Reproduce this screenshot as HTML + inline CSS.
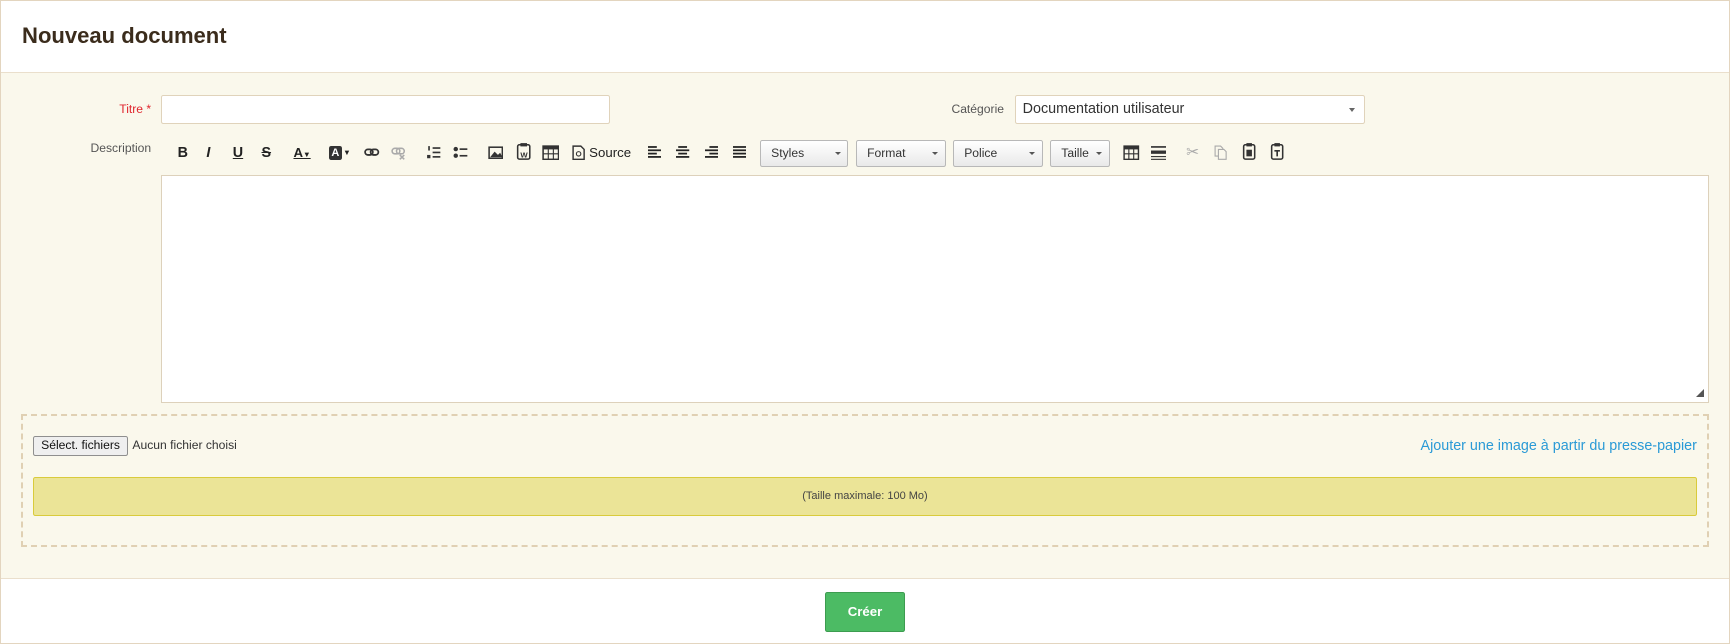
<!DOCTYPE html>
<html><head><meta charset="utf-8"><style>
html{zoom:1.10332}
*{box-sizing:border-box;margin:0;padding:0}
body{width:1568px;height:584px;overflow:hidden;font-family:"Liberation Sans",sans-serif;background:#fff;position:relative}
.abs{position:absolute}
.frame{left:0;top:0;width:1568px;height:584px;border:1px solid #e3d5bf}
.hdr{left:1px;top:1px;width:1566px;height:65px;background:#fff;border-bottom:1px solid #eadfcc}
.hdr h1{position:absolute;left:19px;top:20px;font-size:20px;font-weight:bold;color:#3b2c1c;letter-spacing:0}
.body{left:1px;top:66px;width:1566px;height:459px;background:#faf8ec;border-bottom:1px solid #eadfcc}
.lbl{font-size:11px;color:#555}
.inp{background:#fff;border:1px solid #e0d3bb;border-radius:2px}
.tb{font-size:12px;color:#222;top:128px;height:22px;line-height:22px}
.dd{top:127px;height:24px;border:1px solid #b8b8b8;border-radius:2px;background:linear-gradient(#fff,#e9e9e9);font-size:11px;color:#333;line-height:22px;padding-left:9px}
.dd:after{content:"";position:absolute;right:6px;top:10px;border:3px solid transparent;border-top:3px solid #555}
.ic{position:absolute;top:131px}
</style></head><body>
<div class="abs frame"></div>
<div class="abs hdr"><h1>Nouveau document</h1></div>
<div class="abs body"></div>

<div class="abs lbl" style="left:60px;width:77px;text-align:right;top:92px;color:#e0262e">Titre *</div>
<div class="abs inp" style="left:146px;top:86px;width:407px;height:26px"></div>
<div class="abs lbl" style="left:820px;width:90px;text-align:right;top:92px">Catégorie</div>
<div class="abs inp" style="left:920px;top:86px;width:317px;height:26px;font-size:13px;color:#333;padding:5px 0 0 6px">Documentation utilisateur
<span style="position:absolute;right:8px;top:11px;border:3px solid transparent;border-top:4px solid #666"></span></div>
<div class="abs lbl" style="left:60px;width:77px;text-align:right;top:128px">Description</div>

<div class="abs tb" style="left:161px;font-weight:bold;font-size:13px">B</div>
<div class="abs tb" style="left:187px;font-weight:bold;font-style:italic;font-size:13px">I</div>
<div class="abs tb" style="left:211px;font-weight:bold;text-decoration:underline;font-size:13px">U</div>
<div class="abs tb" style="left:237px;font-weight:bold;text-decoration:line-through;font-size:13px">S</div>
<div class="abs tb" style="left:266px;font-weight:bold;font-size:12px;text-decoration:underline">A<span style="font-size:7px">▼</span></div>
<div class="abs" style="left:298px;top:132px;width:12px;height:13px;background:#333;border-radius:2px;color:#fff;font-size:10px;font-weight:bold;text-align:center;line-height:13px">A</div>
<div class="abs tb" style="left:311px;font-size:7px">▼</div>
<svg class="ic" style="left:330px" width="14" height="14"><g fill="none" stroke="#333" stroke-width="1.6"><rect x="1" y="4" width="7" height="5" rx="2.5"/><rect x="6" y="4" width="7" height="5" rx="2.5"/></g></svg>
<svg class="ic" style="left:354px" width="14" height="14"><g fill="none" stroke="#aaa" stroke-width="1.4"><rect x="1" y="3" width="7" height="5" rx="2.5"/><rect x="5" y="3" width="7" height="5" rx="2.5"/><path d="M8 9l4 4M12 9l-4 4"/></g></svg>
<svg class="ic" style="left:386px" width="14" height="14"><g fill="#333"><rect x="6" y="2" width="7" height="1.5"/><rect x="6" y="6" width="7" height="1.5"/><rect x="6" y="10" width="7" height="1.5"/><rect x="2" y="1" width="1.5" height="4"/><rect x="1" y="9" width="3" height="3"/></g></svg>
<svg class="ic" style="left:411px" width="14" height="14"><g fill="#333"><rect x="6" y="3" width="7" height="1.5"/><rect x="6" y="9" width="7" height="1.5"/><circle cx="2.5" cy="3.7" r="2"/><circle cx="2.5" cy="9.7" r="2"/></g></svg>
<svg class="ic" style="left:442px" width="14" height="14"><rect x="1" y="2" width="12" height="10" fill="none" stroke="#333" stroke-width="1.4"/><path d="M2 11l4-5 3 3 2-2 2 4z" fill="#333"/></svg>
<svg class="ic" style="left:468px;top:129px" width="14" height="17"><rect x="1.5" y="2.5" width="11" height="13" rx="1.5" fill="none" stroke="#333" stroke-width="1.4"/><rect x="4" y="1" width="6" height="3" fill="#333"/><text x="4" y="14" font-size="7" font-family="Liberation Sans" font-weight="bold" fill="#333">W</text></svg>
<svg class="ic" style="left:491px" width="16" height="14"><rect x="1" y="1" width="14" height="12" fill="none" stroke="#333" stroke-width="1.4"/><rect x="1" y="1" width="14" height="3" fill="#333"/><path d="M1 8h14M5.7 1v12M10.3 1v12" stroke="#333"/></svg>
<svg class="ic" style="left:518px" width="12" height="14"><path d="M1 1h7l3 3v9H1z" fill="none" stroke="#333" stroke-width="1.3"/><circle cx="6" cy="8" r="2" fill="none" stroke="#333"/></svg>
<div class="abs tb" style="left:534px;font-size:12px">Source</div>
<svg class="ic" style="left:587px" width="12" height="12"><g fill="#222"><rect y="1" width="8" height="1.6"/><rect y="4" width="12" height="1.6"/><rect y="7" width="8" height="1.6"/><rect y="10" width="12" height="1.6"/></g></svg>
<svg class="ic" style="left:613px" width="12" height="12"><g fill="#222"><rect x="2" y="1" width="8" height="1.6"/><rect y="4" width="12" height="1.6"/><rect x="2" y="7" width="8" height="1.6"/><rect y="10" width="12" height="1.6"/></g></svg>
<svg class="ic" style="left:639px" width="12" height="12"><g fill="#222"><rect x="4" y="1" width="8" height="1.6"/><rect y="4" width="12" height="1.6"/><rect x="4" y="7" width="8" height="1.6"/><rect y="10" width="12" height="1.6"/></g></svg>
<svg class="ic" style="left:664px" width="12" height="12"><g fill="#222"><rect y="1" width="12" height="1.6"/><rect y="4" width="12" height="1.6"/><rect y="7" width="12" height="1.6"/><rect y="10" width="12" height="1.6"/></g></svg>
<div class="abs dd" style="left:689px;width:80px">Styles</div>
<div class="abs dd" style="left:776px;width:81px">Format</div>
<div class="abs dd" style="left:864px;width:81px">Police</div>
<div class="abs dd" style="left:952px;width:54px">Taille</div>
<svg class="ic" style="left:1018px" width="15" height="14"><rect x="1" y="1" width="13" height="12" fill="none" stroke="#333" stroke-width="1.3"/><rect x="1" y="1" width="13" height="3" fill="#333"/><path d="M1 8h13M5.3 1v12M9.7 1v12" stroke="#333"/></svg>
<svg class="ic" style="left:1043px" width="14" height="14"><g fill="#333"><rect y="1" width="14" height="1.5"/><rect y="5" width="14" height="3"/><rect y="10" width="14" height="1"/><rect y="12.5" width="14" height="1"/></g></svg>
<div class="abs tb" style="left:1075px;color:#aaa;font-size:14px">✂</div>
<svg class="ic" style="left:1100px" width="12" height="14"><g fill="none" stroke="#aaa"><path d="M1 1h5l2 2v7H1z"/><path d="M4 4h5l2 2v7H4z" fill="#faf8ec"/></g></svg>
<svg class="ic" style="left:1126px;top:129px" width="13" height="17"><rect x="1.5" y="2.5" width="10" height="13" rx="1.5" fill="none" stroke="#333" stroke-width="1.4"/><rect x="4" y="1" width="5" height="3" fill="#333"/><rect x="4" y="7" width="5" height="6" fill="#333"/></svg>
<svg class="ic" style="left:1151px;top:129px" width="13" height="17"><rect x="1.5" y="2.5" width="10" height="13" rx="1.5" fill="none" stroke="#333" stroke-width="1.4"/><rect x="4" y="1" width="5" height="3" fill="#333"/><path d="M4 8h5M6.5 8v5" stroke="#333" stroke-width="1.5"/></svg>

<div class="abs" style="left:146px;top:159px;width:1403px;height:206px;background:#fff;border:1px solid #ddd1bb"></div>
<div class="abs" style="left:1537px;top:353px;width:0;height:0;border-left:8px solid transparent;border-bottom:8px solid #555"></div>

<div class="abs" style="left:19px;top:375px;width:1530px;height:121px;border:2px dashed #e0d0b3"></div>
<div class="abs" style="left:30px;top:395px;width:86px;height:18px;border:1px solid #8f8f8f;border-radius:2px;background:#efefef;font-size:11px;color:#111;text-align:center;line-height:16px">Sélect. fichiers</div>
<div class="abs" style="left:120px;top:397px;font-size:11px;color:#333">Aucun fichier choisi</div>
<div class="abs" style="right:30px;top:397px;font-size:13px;color:#2a9ad6">Ajouter une image à partir du presse-papier</div>
<div class="abs" style="left:30px;top:432px;width:1508px;height:36px;background:#ebe497;border:1px solid #d9cb3c;border-radius:2px;font-size:10px;color:#444;text-align:center;line-height:34px">(Taille maximale: 100 Mo)</div>

<div class="abs" style="left:748px;top:537px;width:72px;height:36px;background:#4cbb64;border:1px solid #3d9c50;border-radius:2px;color:#fff;font-weight:bold;font-size:12px;text-align:center;line-height:34px">Créer</div>
</body></html>
